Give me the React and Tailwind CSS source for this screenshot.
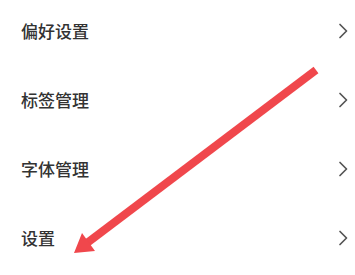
const items = ['偏好设置', '标签管理', '字体管理', '设置'];

const Chevron = () => (
  <svg width="10" height="16" viewBox="0 0 10 16" fill="none">
    <polyline points="2,1.5 8.5,8 2,14.5" stroke="#555" strokeWidth="1.7" strokeLinecap="round" strokeLinejoin="round" />
  </svg>
);

export default function App() {
  return (
    <div className="relative w-[355px] h-[275px] overflow-hidden bg-white font-['Noto_Sans_CJK_SC',sans-serif]">
      <div className="flex flex-col gap-[52px] pt-[22px] pl-[21px] pr-[7px]">
        {items.map((label) => (
          <div key={label} className="flex items-center justify-between h-[17px]">
            <span className="text-[17px] leading-[17px] text-[#333] font-medium">{label}</span>
            <Chevron />
          </div>
        ))}
      </div>

      {/* annotation arrow */}
      <svg className="absolute inset-0 pointer-events-none" width="355" height="275" viewBox="0 0 355 275">
        <line x1="316" y1="70" x2="87" y2="243" stroke="#f0474c" strokeWidth="8" />
        <polygon points="74,253 82,233 95,251" fill="#f0474c" />
      </svg>
    </div>
  );
}
